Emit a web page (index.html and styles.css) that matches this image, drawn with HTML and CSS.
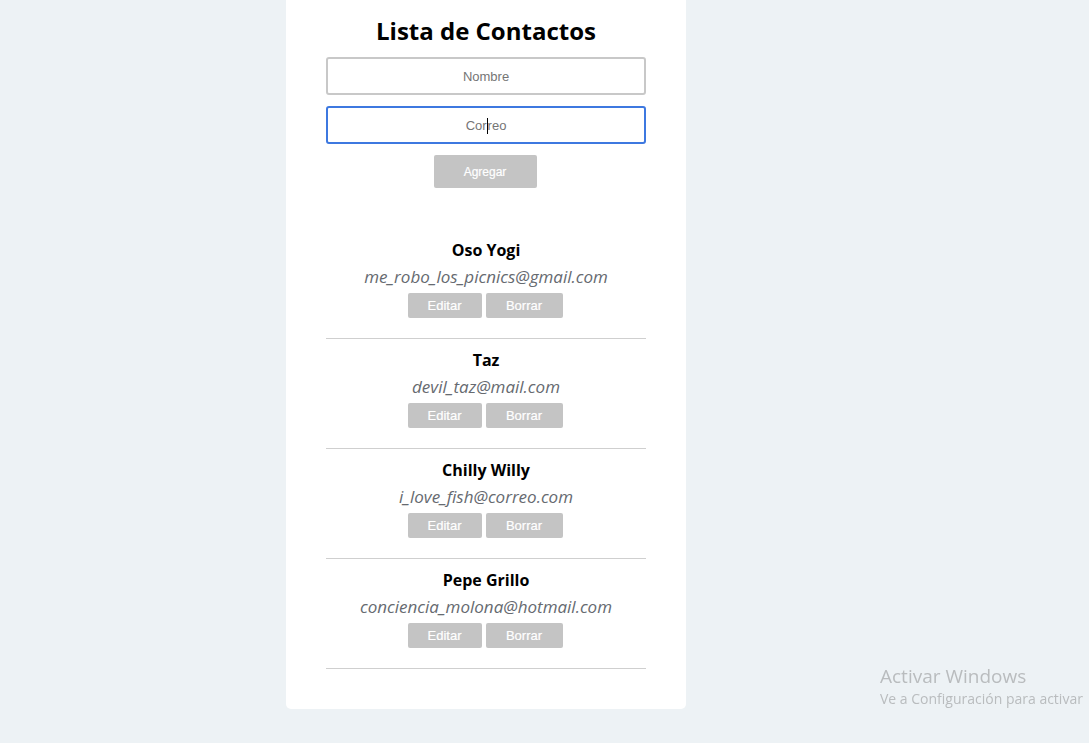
FILE: index.html
```html
<!DOCTYPE html>
<html lang="es">
<head>
<meta charset="utf-8">
<title>Lista de Contactos</title>
<link rel="stylesheet" href="styles.css">
</head>
<body>
<main class="card">
  <h1 class="title">Lista de Contactos</h1>
  <form class="form">
    <input class="field" type="text" placeholder="Nombre">
    <div class="field field--focus"><span>Cor</span><span class="caret"></span><span>reo</span></div>
    <button class="btn btn--add" type="button">Agregar</button>
  </form>
  <ul class="list">
    <li class="contact">
      <div class="name">Oso Yogi</div>
      <div class="email">me_robo_los_picnics@gmail.com</div>
      <div class="actions"><button class="btn" type="button">Editar</button><button class="btn" type="button">Borrar</button></div>
    </li>
    <li class="contact">
      <div class="name">Taz</div>
      <div class="email">devil_taz@mail.com</div>
      <div class="actions"><button class="btn" type="button">Editar</button><button class="btn" type="button">Borrar</button></div>
    </li>
    <li class="contact">
      <div class="name">Chilly Willy</div>
      <div class="email">i_love_fish@correo.com</div>
      <div class="actions"><button class="btn" type="button">Editar</button><button class="btn" type="button">Borrar</button></div>
    </li>
    <li class="contact">
      <div class="name">Pepe Grillo</div>
      <div class="email">conciencia_molona@hotmail.com</div>
      <div class="actions"><button class="btn" type="button">Editar</button><button class="btn" type="button">Borrar</button></div>
    </li>
  </ul>
</main>
<div class="watermark">
  <div class="wm-title">Activar Windows</div>
  <div class="wm-sub">Ve a Configuración para activar</div>
</div>
</body>
</html>
```
FILE: styles.css
```css
html, body {
  margin: 0;
  padding: 0;
}
body {
  background: #edf2f5;
  font-family: "Open Sans", "Liberation Sans", sans-serif;
  overflow: hidden;
  height: 743px;
}
.card {
  width: 320px;
  margin-left: 286px;
  background: #fff;
  padding: 12px 40px 40px;
  border-radius: 0 0 5px 5px;
}
.title {
  margin: 0;
  text-align: center;
  font-size: 24px;
  font-weight: 700;
  line-height: 38px;
  color: #000;
}
.form {
  display: flex;
  flex-direction: column;
  align-items: center;
  margin-top: 7px;
}
.field {
  box-sizing: border-box;
  width: 320px;
  height: 38px;
  border: 2px solid #c8c8c8;
  border-radius: 3px;
  text-align: center;
  font-family: "Liberation Sans", Arial, sans-serif;
  font-size: 13px;
  color: #757575;
  outline: none;
  padding: 0;
  margin: 0 0 11px;
}
.field::placeholder {
  color: #757575;
}
.field--focus {
  border-color: #3d78e0;
  display: flex;
  align-items: center;
  justify-content: center;
}
.caret {
  display: inline-block;
  width: 1px;
  height: 16px;
  background: #000;
  margin-top: 2px;
}
.btn {
  font-family: "Liberation Sans", Arial, sans-serif;
  font-size: 13px;
  color: #fff;
  background: #c4c4c4;
  border: none;
  border-radius: 2px;
  padding: 0 20px;
  height: 25px;
  cursor: pointer;
  -webkit-text-stroke: 0.2px #fff;
}
.btn--add {
  height: 33px;
  width: 103px;
  padding: 0;
  font-size: 12px;
  margin-right: 2px;
}
.list {
  list-style: none;
  margin: 40px 0 0;
  padding: 0;
}
.contact {
  border-bottom: 1px solid #cfcfcf;
  padding: 10px 0 20px;
  display: flex;
  flex-direction: column;
  align-items: center;
}
.contact + .contact {
  padding-top: 9px;
}
.name {
  font-weight: 700;
  font-size: 16px;
  line-height: 24px;
  color: #000;
}
.email {
  font-style: italic;
  font-size: 17px;
  line-height: 30px;
  color: #666a70;
}
.actions {
  display: flex;
  gap: 4px;
  margin-top: 1px;
  margin-right: 2px;
}
.actions .btn:first-child {
  width: 74px;
  padding: 0;
}
.actions .btn:last-child {
  width: 77px;
  padding: 0;
}
.watermark {
  position: fixed;
  left: 880px;
  top: 664px;
  color: #b9bcbe;
  font-family: "Open Sans", "Liberation Sans", sans-serif;
  white-space: nowrap;
}
.wm-title {
  font-size: 19px;
  line-height: 24px;
}
.wm-sub {
  font-size: 14px;
  line-height: 22px;
}
```
